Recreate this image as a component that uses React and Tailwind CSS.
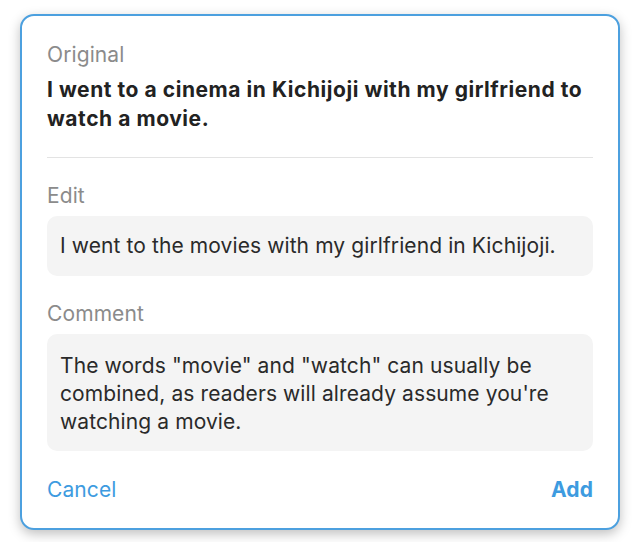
export default function App() {
  return (
    <div className="min-h-screen bg-white pt-[14px] pl-[20px]" style={{ fontFamily: "Inter, 'Noto Sans', sans-serif" }}>
      <div className="w-[600px] h-[516px] border-2 border-[#4ca0df] rounded-[14px] bg-white shadow-[0_4px_12px_rgba(0,0,0,0.25)] px-[25px] pt-[27px] flex flex-col">
        {/* original sentence */}
        <div className="text-[21px] leading-[24px] tracking-[0.1px] text-[#8b8b8b]">Original</div>
        <p className="mt-[8px] text-[21px] leading-[29px] tracking-[0.55px] font-bold text-[#222]">
          I went to a cinema in Kichijoji with my girlfriend to watch a movie.
        </p>
        <div className="mt-[24px] h-px bg-[#e3e3e3]"></div>

        {/* edit */}
        <div className="mt-[26px] text-[21px] leading-[24px] tracking-[0.1px] text-[#8b8b8b]">Edit</div>
        <div className="mt-[8px] rounded-[10px] bg-[#f4f4f4] px-[13px] py-[16px] text-[21px] leading-[28px] tracking-[0.1px] text-[#2a2a2a]">
          I went to the movies with my girlfriend in Kichijoji.
        </div>

        {/* comment */}
        <div className="mt-[26px] text-[21px] leading-[24px] tracking-[0.1px] text-[#8b8b8b]">Comment</div>
        <div className="mt-[8px] rounded-[10px] bg-[#f4f4f4] px-[13px] pt-[18px] pb-[15px] text-[21px] leading-[28px] tracking-[0.1px] text-[#2a2a2a]">
          The words "movie" and "watch" can usually be combined, as readers will already assume you're watching a movie.
        </div>

        <div className="mt-[27px] flex items-center justify-between text-[21px] leading-[24px] tracking-[0.1px] text-[#3d9be0]">
          <button>Cancel</button>
          <button className="font-bold">Add</button>
        </div>
      </div>
    </div>
  );
}
